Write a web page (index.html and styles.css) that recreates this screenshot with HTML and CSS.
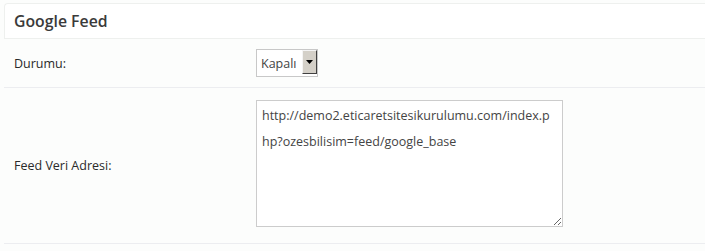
FILE: index.html
```html
<!DOCTYPE html>
<html>
<head>
  <title>Google Feed</title>
  <link rel="stylesheet" href="styles.css">
</head>
<body>
  <div class="panel">
    <div class="heading">Google Feed</div>
    <div class="row">
      <div class="label">Durumu:</div>
      <div class="field">
        <div class="select">
          <select>
            <option>Kapalı</option>
            <option>Açık</option>
          </select>
          <span class="drop"><svg width="7" height="4" viewBox="0 0 7 4"><path d="M0 0h7L3.5 4z" fill="#000"/></svg></span>
        </div>
      </div>
    </div>
    <div class="row tall">
      <div class="label">Feed Veri Adresi:</div>
      <div class="field">
        <textarea>http://demo2.eticaretsitesikurulumu.com/index.php?ozesbilisim=feed/google_base</textarea>
      </div>
    </div>
  </div>
</body>
</html>
```

FILE: styles.css
```css
body {
  margin: 0;
  padding: 3px 0 0 4px;
  background-color: #fcfdfc;
  font-family: 'Open Sans', sans-serif;
  color: #2a2a2a;
}

.heading {
  height: 34px;
  line-height: 34px;
  padding-left: 9px;
  font-size: 15.8px;
  font-weight: 600;
  color: #3a3a3a;
  background-color: #fff;
  border: 1px solid #eef0ee;
  border-right: none;
  border-top-left-radius: 4px;
}

.row {
  display: flex;
  align-items: center;
  border-bottom: 1px solid #ecedf0;
}

.row .label {
  width: 242px;
  padding-left: 10px;
  font-size: 12.5px;
}

.row .field {
  padding: 10px 0 10px 0;
}

.select {
  position: relative;
  width: 62px;
}

.select select {
  appearance: none;
  -webkit-appearance: none;
  width: 62px;
  height: 28px;
  margin: 0;
  padding: 0 0 0 4px;
  font-family: 'Open Sans', sans-serif;
  font-size: 12.5px;
  color: #444;
  background: #fff;
  border: 1px solid #c8c8c8;
  border-radius: 0;
}

.drop {
  position: absolute;
  right: 1px;
  top: 1px;
  width: 13px;
  height: 22px;
  background: #d4d0c8;
  border: 1px solid;
  border-color: #f4f4f4 #404040 #404040 #f4f4f4;
  display: flex;
  align-items: center;
  justify-content: center;
}

.tall .field {
  padding: 12px 0 16px 0;
}

textarea {
  display: block;
  width: 307px;
  height: 127px;
  margin: 0;
  padding: 2px 5px;
  box-sizing: border-box;
  font-family: 'Open Sans', sans-serif;
  font-size: 12.5px;
  line-height: 26px;
  color: #444;
  background: #fff;
  border: 1px solid #cccccc;
  border-radius: 0;
}
```
